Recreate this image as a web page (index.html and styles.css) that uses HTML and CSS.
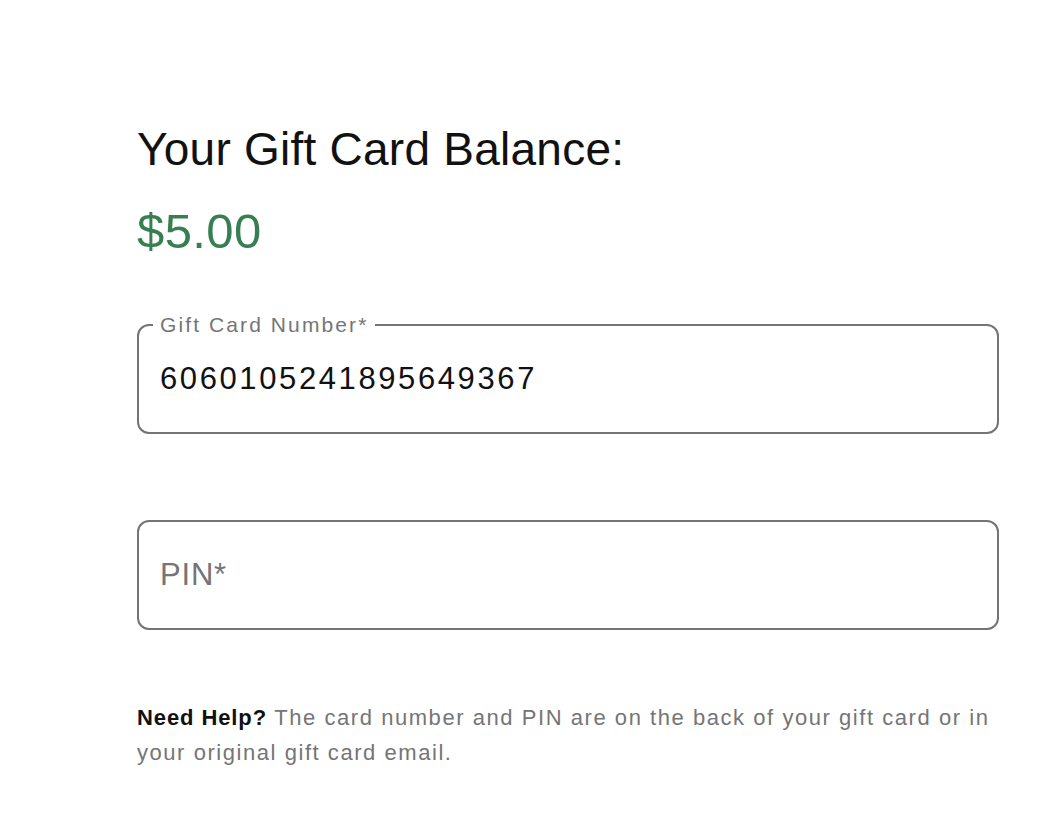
FILE: index.html
```html
<!DOCTYPE html>
<html lang="en">
<head>
<meta charset="utf-8">
<title>Gift Card Balance</title>
<link rel="stylesheet" href="styles.css">
</head>
<body>
<main class="balance">
  <h1 class="balance-title">Your Gift Card Balance:</h1>
  <p class="balance-amount">$5.00</p>
  <div class="field field-filled">
    <span class="field-label">Gift Card Number*</span>
    <span class="field-value">6060105241895649367</span>
  </div>
  <div class="field field-empty">
    <span class="field-placeholder">PIN*</span>
  </div>
  <p class="help"><strong class="help-strong">Need Help?</strong> The card number and PIN are on the back of your gift card or in your original gift card email.</p>
</main>
</body>
</html>
```

FILE: styles.css
```css
html, body {
  margin: 0;
  padding: 0;
  background: #ffffff;
}

body {
  font-family: "Liberation Sans", Arial, sans-serif;
  color: #111111;
}

.balance {
  width: 862px;
  margin-left: 137px;
  padding-top: 121px;
}

.balance-title {
  margin: 0;
  font-size: 46px;
  line-height: 56px;
  font-weight: 400;
  letter-spacing: 0.25px;
  color: #111111;
}

.balance-amount {
  margin: 25px 0 0;
  font-size: 49px;
  line-height: 58px;
  font-weight: 400;
  letter-spacing: 0.4px;
  color: #357f50;
}

.field {
  position: relative;
  box-sizing: border-box;
  height: 110px;
  border: 2px solid #747474;
  border-radius: 12px;
  display: flex;
  align-items: center;
  padding: 0 21px;
}

.field-filled {
  margin-top: 64px;
}

.field-empty {
  margin-top: 86px;
}

.field-label {
  position: absolute;
  top: -14px;
  left: 14px;
  padding: 0 7px;
  background: #ffffff;
  font-size: 21px;
  line-height: 25px;
  letter-spacing: 2.1px;
  color: #757575;
}

.field-value {
  font-size: 31px;
  letter-spacing: 2.6px;
  color: #111111;
}

.field-placeholder {
  font-size: 31px;
  letter-spacing: 0.8px;
  color: #757575;
}

.help {
  margin: 70px 0 0;
  font-size: 22px;
  line-height: 35px;
  letter-spacing: 1.55px;
  color: #757575;
}

.help-strong {
  font-weight: 700;
  color: #111111;
  letter-spacing: 0.9px;
}
```
